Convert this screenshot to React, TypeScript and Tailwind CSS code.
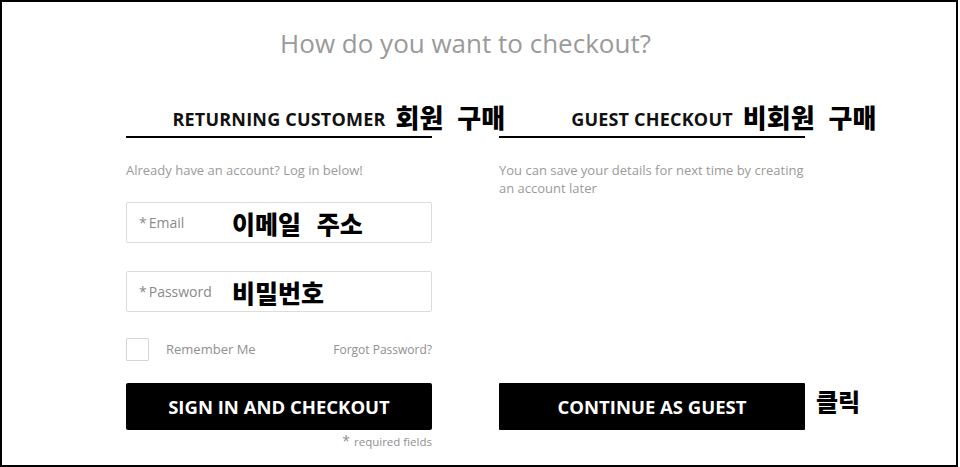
import React from 'react';

const ko = "font-['Noto_Sans_CJK_KR',sans-serif] font-black text-black";

function Heading({ title, note }: { title: string; note: string }) {
  return (
    <div className="border-b-2 border-black pb-[4px] text-center">
      <span className="relative inline-block text-[18px] font-bold leading-[23px] tracking-[0.2px] text-[#111]">
        {title}
        <span
          className={`absolute left-full top-[-7px] ml-[10px] whitespace-nowrap text-[26px] leading-[32px] tracking-normal [word-spacing:8px] ${ko}`}
        >
          {note}
        </span>
      </span>
    </div>
  );
}

function Field({ label, note }: { label: string; note: string }) {
  return (
    <div className="relative flex h-[41px] items-center rounded-[2px] border border-[#dcdcdc] pl-[12px] text-[14px] text-[#8a8a8a]">
      <span>
        <span className="mr-[2px]">*</span>
        {label}
      </span>
      <span
        className={`absolute left-[105px] top-[4px] whitespace-nowrap text-[25px] leading-[32px] [word-spacing:10px] ${ko}`}
      >
        {note}
      </span>
    </div>
  );
}

export default function App() {
  return (
    <div className="h-[467px] w-[958px] border-2 border-black bg-white font-['Open_Sans',sans-serif]">
      <div className="pl-[124px]">
        <h1 className="mt-[25px] w-[679px] text-center text-[26px] font-normal leading-[32px] text-[#9a9a9a]">
          How do you want to checkout?
        </h1>
      </div>

      <div className="mt-[49px] flex gap-[67px] pl-[124px]">
        {/* returning customer */}
        <div className="w-[306px]">
          <Heading title="RETURNING CUSTOMER" note="회원 구매" />
          <p className="mt-[23px] text-[13px] leading-[18px] text-[#9a9a9a]">
            Already have an account? Log in below!
          </p>
          <div className="mt-[23px]">
            <Field label="Email" note="이메일 주소" />
          </div>
          <div className="mt-[28px]">
            <Field label="Password" note="비밀번호" />
          </div>
          <div className="mt-[26px] flex h-[23px] items-center">
            <div className="h-[23px] w-[23px] rounded-[1px] border border-[#d6d6d6]" />
            <span className="ml-[17px] text-[13px] text-[#8f8f8f]">Remember Me</span>
            <span className="ml-auto text-[12px] text-[#8f8f8f]">Forgot Password?</span>
          </div>
          <button className="mt-[22px] flex h-[47px] w-full items-center justify-center rounded-[2px] bg-black text-[18.5px] font-bold text-white">
            SIGN IN AND CHECKOUT
          </button>
          <p className="mt-[3px] text-right text-[11.5px] leading-[16px] text-[#8f8f8f]">
            <span className="mr-[4px] text-[14px]">*</span>required fields
          </p>
        </div>

        {/* guest */}
        <div className="w-[306px]">
          <Heading title="GUEST CHECKOUT" note="비회원 구매" />
          <p className="mt-[23px] text-[13px] leading-[18px] text-[#9a9a9a]">
            You can save your details for next time by creating
            <br />
            an account later
          </p>
          <div className="relative mt-[186px]">
            <button className="flex h-[47px] w-full items-center justify-center rounded-[1px] bg-black text-[18.5px] font-bold text-white">
              CONTINUE AS GUEST
            </button>
            <span className={`absolute left-full top-[2px] ml-[11px] whitespace-nowrap text-[24px] leading-[32px] ${ko}`}>
              클릭
            </span>
          </div>
        </div>
      </div>
    </div>
  );
}
